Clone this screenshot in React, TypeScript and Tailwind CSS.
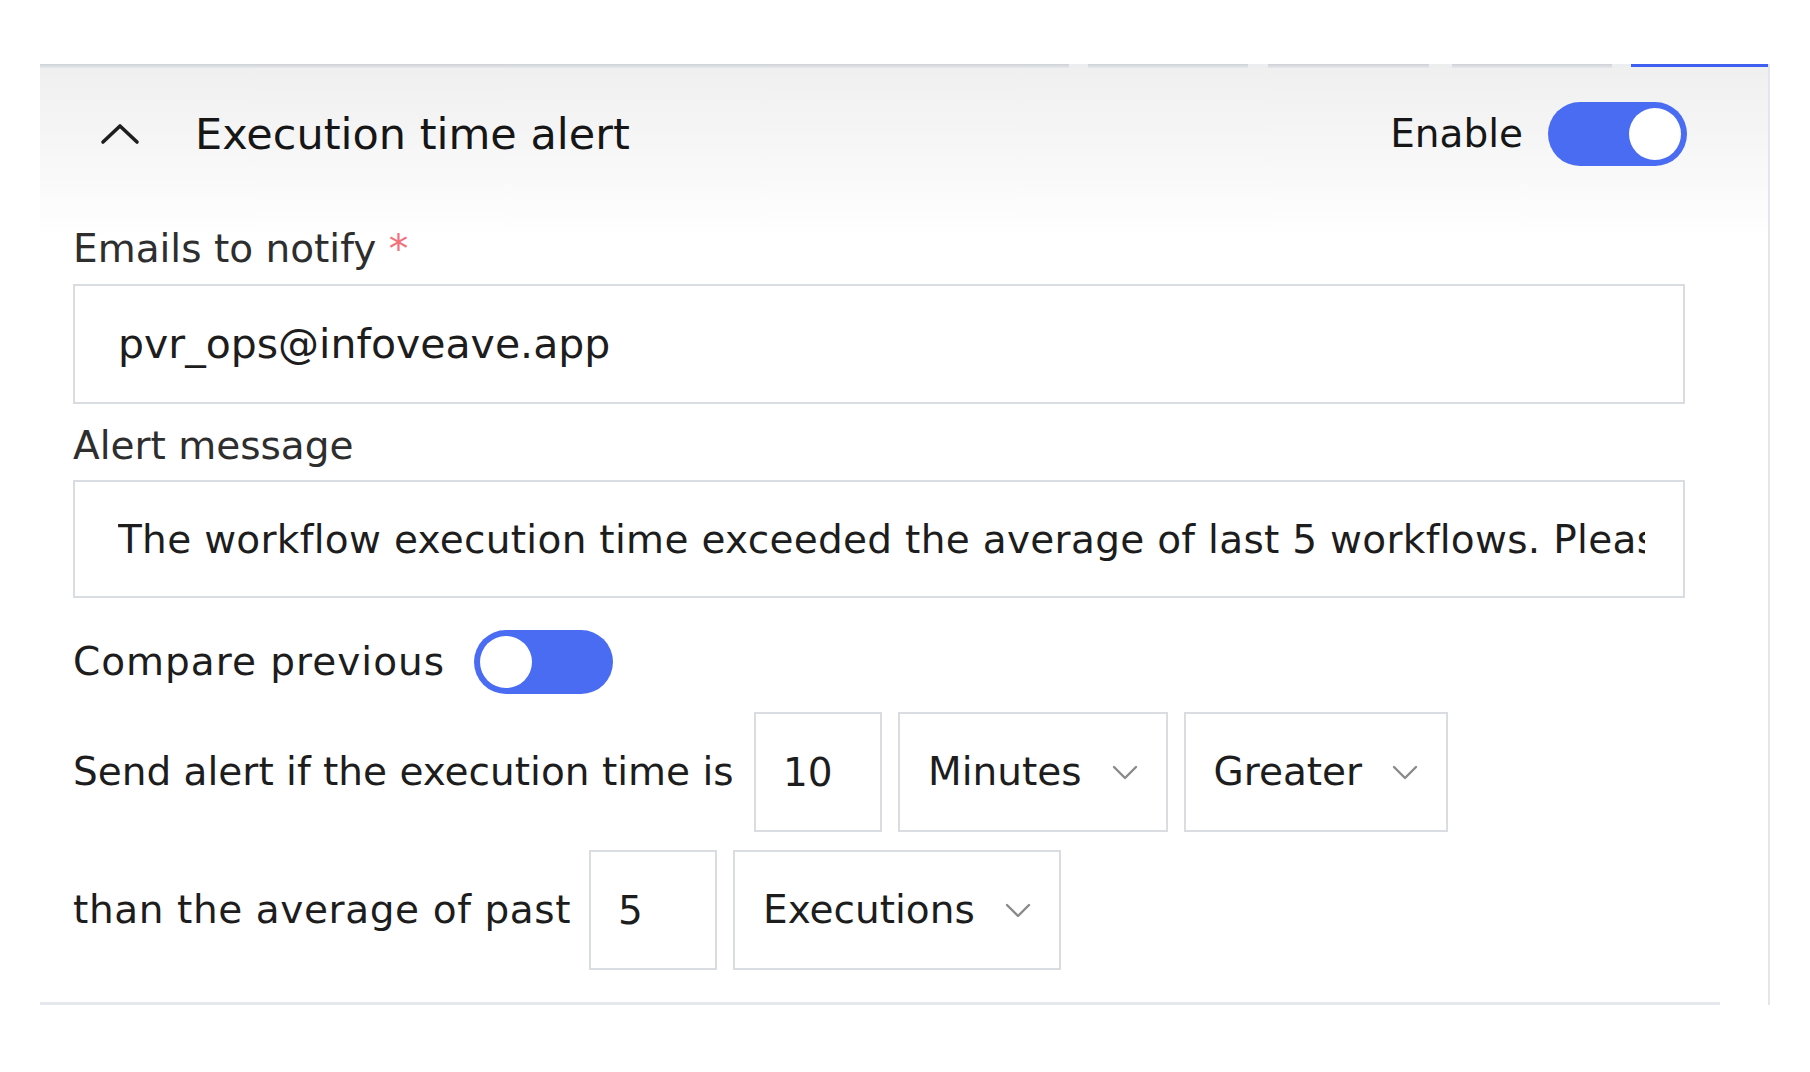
import React from 'react';

const font = "font-['DejaVu_Sans',sans-serif]";

const Toggle: React.FC<{ on: boolean }> = ({ on }) => (
  <div
    className={`flex h-[64px] w-[139px] shrink-0 items-center rounded-full bg-[#4a6cf2] px-[6px] ${
      on ? 'justify-end' : 'justify-start'
    }`}
  >
    <div className="h-[52px] w-[52px] rounded-full bg-white" />
  </div>
);

const Chevron: React.FC = () => (
  <svg width="26" height="15" viewBox="0 0 26 15" fill="none">
    <polyline points="2,2 13,13 24,2" stroke="#8a8a8a" strokeWidth="2.4" strokeLinecap="round" strokeLinejoin="round" />
  </svg>
);

const SelectBox: React.FC<{ label: string }> = ({ label }) => (
  <div className="flex h-[120px] items-center gap-[30px] border-2 border-[#d9dde2] bg-white pl-[28px] pr-[28px]">
    <span className="text-[39px] leading-[48px] text-[#1d1d1d]">{label}</span>
    <Chevron />
  </div>
);

const NumberBox: React.FC<{ value: string }> = ({ value }) => (
  <input
    readOnly
    defaultValue={value}
    className="h-[120px] w-[128px] border-2 border-[#d9dde2] bg-white pl-[27px] text-[39px] text-[#1d1d1d] outline-none"
  />
);

export default function App() {
  return (
    <div className={`min-h-screen bg-white pl-[40px] pt-[64px] ${font}`}>
      <div className="w-[1730px] border-r-2 border-[#e3e6ea] bg-[linear-gradient(180deg,#efefef_0px,#f6f6f6_80px,#ffffff_175px)]">
        {/* tab underline strip */}
        <div className="flex h-[4px] bg-[#eceef0]">
          <div className="w-[1029px] bg-[linear-gradient(180deg,#cdd2d8,#e6e8eb)]" />
          <div className="ml-[19px] w-[160px] bg-[linear-gradient(180deg,#cdd2d8,#e6e8eb)]" />
          <div className="ml-[20px] w-[161px] bg-[linear-gradient(180deg,#cdd2d8,#e6e8eb)]" />
          <div className="ml-[23px] w-[160px] bg-[linear-gradient(180deg,#cdd2d8,#e6e8eb)]" />
          <div className="ml-[19px] h-[3px] flex-1 bg-[#3f5ff0]" />
        </div>

        {/* header */}
        <div className="flex h-[132px] items-center pl-[60px] pr-[81px]">
          <svg width="40" height="22" viewBox="0 0 40 22" fill="none">
            <polyline points="3,19 20,3 37,19" stroke="#1e1e1e" strokeWidth="3.6" strokeLinecap="round" strokeLinejoin="round" />
          </svg>
          <h2 className="ml-[55px] text-[43px] leading-[52px] text-[#161616]">Execution time alert</h2>
          <div className="ml-auto flex items-center gap-[25px]">
            <span className="text-[39px] leading-[48px] text-[#161616]">Enable</span>
            <Toggle on />
          </div>
        </div>

        {/* body */}
        <div className="pl-[33px] pr-[83px] pt-[25px]">
          <div className="text-[39px] leading-[48px] text-[#2e2e2e]">
            Emails to notify <span className="text-[#f4707a]">*</span>
          </div>
          <input
            readOnly
            defaultValue="pvr_ops@infoveave.app"
            className="mt-[11px] h-[120px] w-full border-2 border-[#d9dde2] bg-white pl-[43px] pr-[38px] text-[41px] text-[#1d1d1d] outline-none"
          />

          <div className="mt-[18px] text-[39px] leading-[48px] text-[#2e2e2e]">Alert message</div>
          <input
            readOnly
            defaultValue="The workflow execution time exceeded the average of last 5 workflows. Please check the workflow."
            className="mt-[10px] h-[118px] w-full border-2 border-[#d9dde2] bg-white pl-[43px] pr-[38px] text-[39px] tracking-[0.3px] text-[#1d1d1d] outline-none"
          />

          <div className="mt-[32px] flex items-center gap-[27px]">
            <span className="w-[374px] shrink-0 text-[39px] leading-[48px] tracking-[1px] text-[#1d1d1d]">
              Compare previous
            </span>
            <Toggle on={false} />
          </div>

          <div className="mt-[18px] flex items-center gap-[16px]">
            <span className="w-[665px] shrink-0 text-[39px] leading-[48px] text-[#1d1d1d]">
              Send alert if the execution time is
            </span>
            <NumberBox value="10" />
            <SelectBox label="Minutes" />
            <SelectBox label="Greater" />
          </div>

          <div className="mt-[18px] flex items-center gap-[16px]">
            <span className="w-[500px] shrink-0 text-[39px] leading-[48px] tracking-[0.6px] text-[#1d1d1d]">
              than the average of past
            </span>
            <NumberBox value="5" />
            <SelectBox label="Executions" />
          </div>
        </div>

        <div className="mt-[32px] h-[3px] w-[1680px] bg-[#e5e8ec]" />
      </div>
    </div>
  );
}
